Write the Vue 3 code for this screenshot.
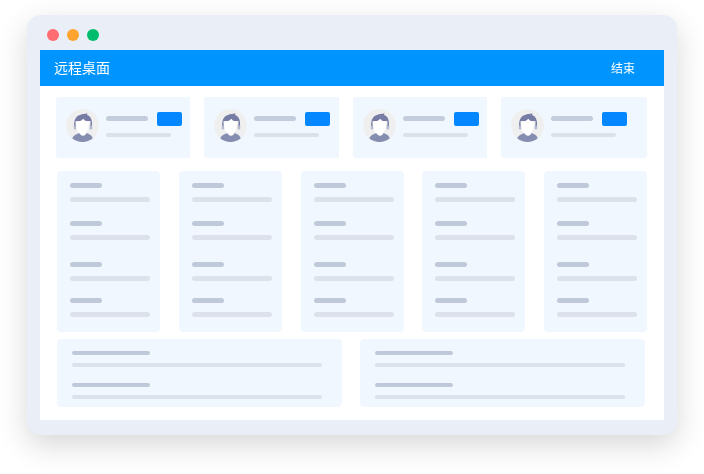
<script setup>
const people = ['first', 'second', 'third', 'fourth']
const columns = [1, 2, 3, 4, 5]
const rows = ['a', 'b', 'c', 'd']
const panels = [1, 2]
</script>

<template>
  <div class="stage">
    <div class="window">
      <div class="chrome">
        <span class="dot red"></span>
        <span class="dot orange"></span>
        <span class="dot green"></span>
      </div>
      <div class="screen">
        <header class="bar">
          <span class="title">远程桌面</span>
          <span class="end">结束</span>
        </header>
        <div class="content">
          <section class="people">
            <article v-for="p in people" :key="p" class="person" :class="p">
              <svg class="avatar" viewBox="0 0 33 33" aria-hidden="true">
                <circle cx="16.5" cy="16.5" r="16.5" fill="#efefef" />
                <path d="M6.35 29.5C7.500 26 11 24.800 14 24c1 3 5 3 6 0 3 .8 6 2 6.650 5.500a16.500 16.500 0 0 1-20.300 0z" fill="#858db0" />
                <path d="M13.800 22h6.400v2.300c-.6 3.200-5.800 3.200-6.400 0z" fill="#fff" />
                <rect x="7.800" y="15.500" width="2.500" height="5" rx="1.200" fill="#b4b9cf" />
                <rect x="23.700" y="15.500" width="2.500" height="5" rx="1.200" fill="#b4b9cf" />
                <path d="M8.200 16.500C7.800 11.500 9.800 7 14 6c2-1.500 5-1 7.500-1.800L21 6c3.500 1 5.500 5 5 10.500h-1.500V12h-15v4.500z" fill="#767ca3" />
                <path d="M10.200 13c2.900-.1 5.600-1.300 7.100-3.300 1.300 2 3.300 3 5.500 3.100.5 6-1.300 12.400-6.300 12.700-5-.3-6.900-6.500-6.300-12.500z" fill="#fff" />
              </svg>
              <div class="info">
                <div class="info-top">
                  <span class="line strong short"></span>
                  <span class="pill"></span>
                </div>
                <span class="line soft long"></span>
              </div>
            </article>
          </section>
          <section class="columns">
            <article v-for="c in columns" :key="c" class="column">
              <div v-for="r in rows" :key="r" class="item" :class="r">
                <span class="line strong tiny"></span>
                <span class="line soft wide"></span>
              </div>
            </article>
          </section>
          <section class="panels">
            <article v-for="p in panels" :key="p" class="panel">
              <div class="panel-item">
                <span class="line strong mid"></span>
                <span class="line soft full"></span>
              </div>
              <div class="panel-item">
                <span class="line strong mid"></span>
                <span class="line soft full"></span>
              </div>
            </article>
          </section>
        </div>
      </div>
    </div>
  </div>
</template>

<style>
html, body { margin: 0; background: #fff; }
</style>

<style scoped>
.stage {
  width: 704px;
  height: 474px;
  padding: 15px 27px 0;
  box-sizing: border-box;
  overflow: hidden;
  background: #fff;
}
.window {
  width: 650px;
  height: 420px;
  box-sizing: border-box;
  padding: 0 13px 15px;
  background: #e9eef7;
  border-radius: 14px;
  box-shadow: 0 10px 30px rgba(0, 0, 0, 0.16);
  display: flex;
  flex-direction: column;
}
.chrome {
  height: 35px;
  flex: none;
  display: flex;
  align-items: center;
  gap: 8px;
  padding-left: 7px;
  padding-top: 5px;
  box-sizing: border-box;
}
.dot { width: 12px; height: 12px; border-radius: 50%; }
.red { background: #ff6c72; }
.orange { background: #ffa52f; }
.green { background: #00bc6c; }
.screen {
  width: 624px;
  flex: 1;
  background: #fff;
  display: flex;
  flex-direction: column;
}
.bar {
  height: 36px;
  flex: none;
  background: #0094ff;
  color: #fff;
  display: flex;
  align-items: center;
  justify-content: space-between;
  padding: 0 29px 2px 14px;
  box-sizing: border-box;
  font-family: "Noto Sans CJK SC", "Liberation Sans", sans-serif;
}
.title { font-size: 14px; filter: blur(0.25px); }
.end { font-size: 12px; filter: blur(0.25px); }
.content {
  flex: 1;
  padding: 11px 17px 0 16px;
  display: flex;
  flex-direction: column;
}
.people { display: flex; gap: 14px; height: 61px; }
.person {
  display: flex;
  align-items: flex-start;
  gap: 7px;
  background: #f1f7ff;
  border-radius: 3px 0 0 3px;
  padding: 12px 0 0 10px;
  box-sizing: border-box;
}
.first { width: 134px; }
.second { width: 135px; }
.third { width: 134px; }
.fourth { width: 146px; border-radius: 3px; }
.avatar { width: 33px; height: 33px; flex: none; filter: blur(0.25px); }
.info { display: flex; flex-direction: column; padding-top: 3px; }
.info-top { display: flex; align-items: flex-start; gap: 9px; }
.line { display: block; border-radius: 2.5px; filter: blur(0.3px); }
.strong { background: #c3cddb; height: 5px; }
.soft { background: #dce1ec; height: 5px; }
.short { width: 42px; margin-top: 4px; }
.long { width: 65px; height: 4px; margin-top: 7px; }
.pill {
  width: 25px;
  height: 14px;
  background: #0587ff;
  border-radius: 2px;
  filter: blur(0.25px);
}
.columns {
  display: flex;
  justify-content: space-between;
  margin-top: 13px;
  padding-left: 1px;
}
.column {
  width: 103px;
  height: 161px;
  background: #f1f7ff;
  border-radius: 4px;
  padding: 12px 10px 0 13px;
  box-sizing: border-box;
}
.item { display: flex; flex-direction: column; gap: 9px; }
.item.b { margin-top: 19px; }
.item.c { margin-top: 22px; }
.item.d { margin-top: 17px; }
.tiny { width: 32px; background: #bfc9d9; }
.wide { width: 80px; }
.panels {
  display: flex;
  gap: 18px;
  margin-top: 7px;
  padding-left: 1px;
}
.panel {
  width: 285px;
  height: 68px;
  background: #f1f7ff;
  border-radius: 4px;
  padding: 12px 20px 0 15px;
  box-sizing: border-box;
}
.panel-item { display: flex; flex-direction: column; gap: 8px; }
.panel-item + .panel-item { margin-top: 16px; }
.panel .line { filter: none; border-radius: 2px; height: 4px; }
.mid { width: 78px; background: #bfc9d9; }
.full { width: 250px; }
</style>
